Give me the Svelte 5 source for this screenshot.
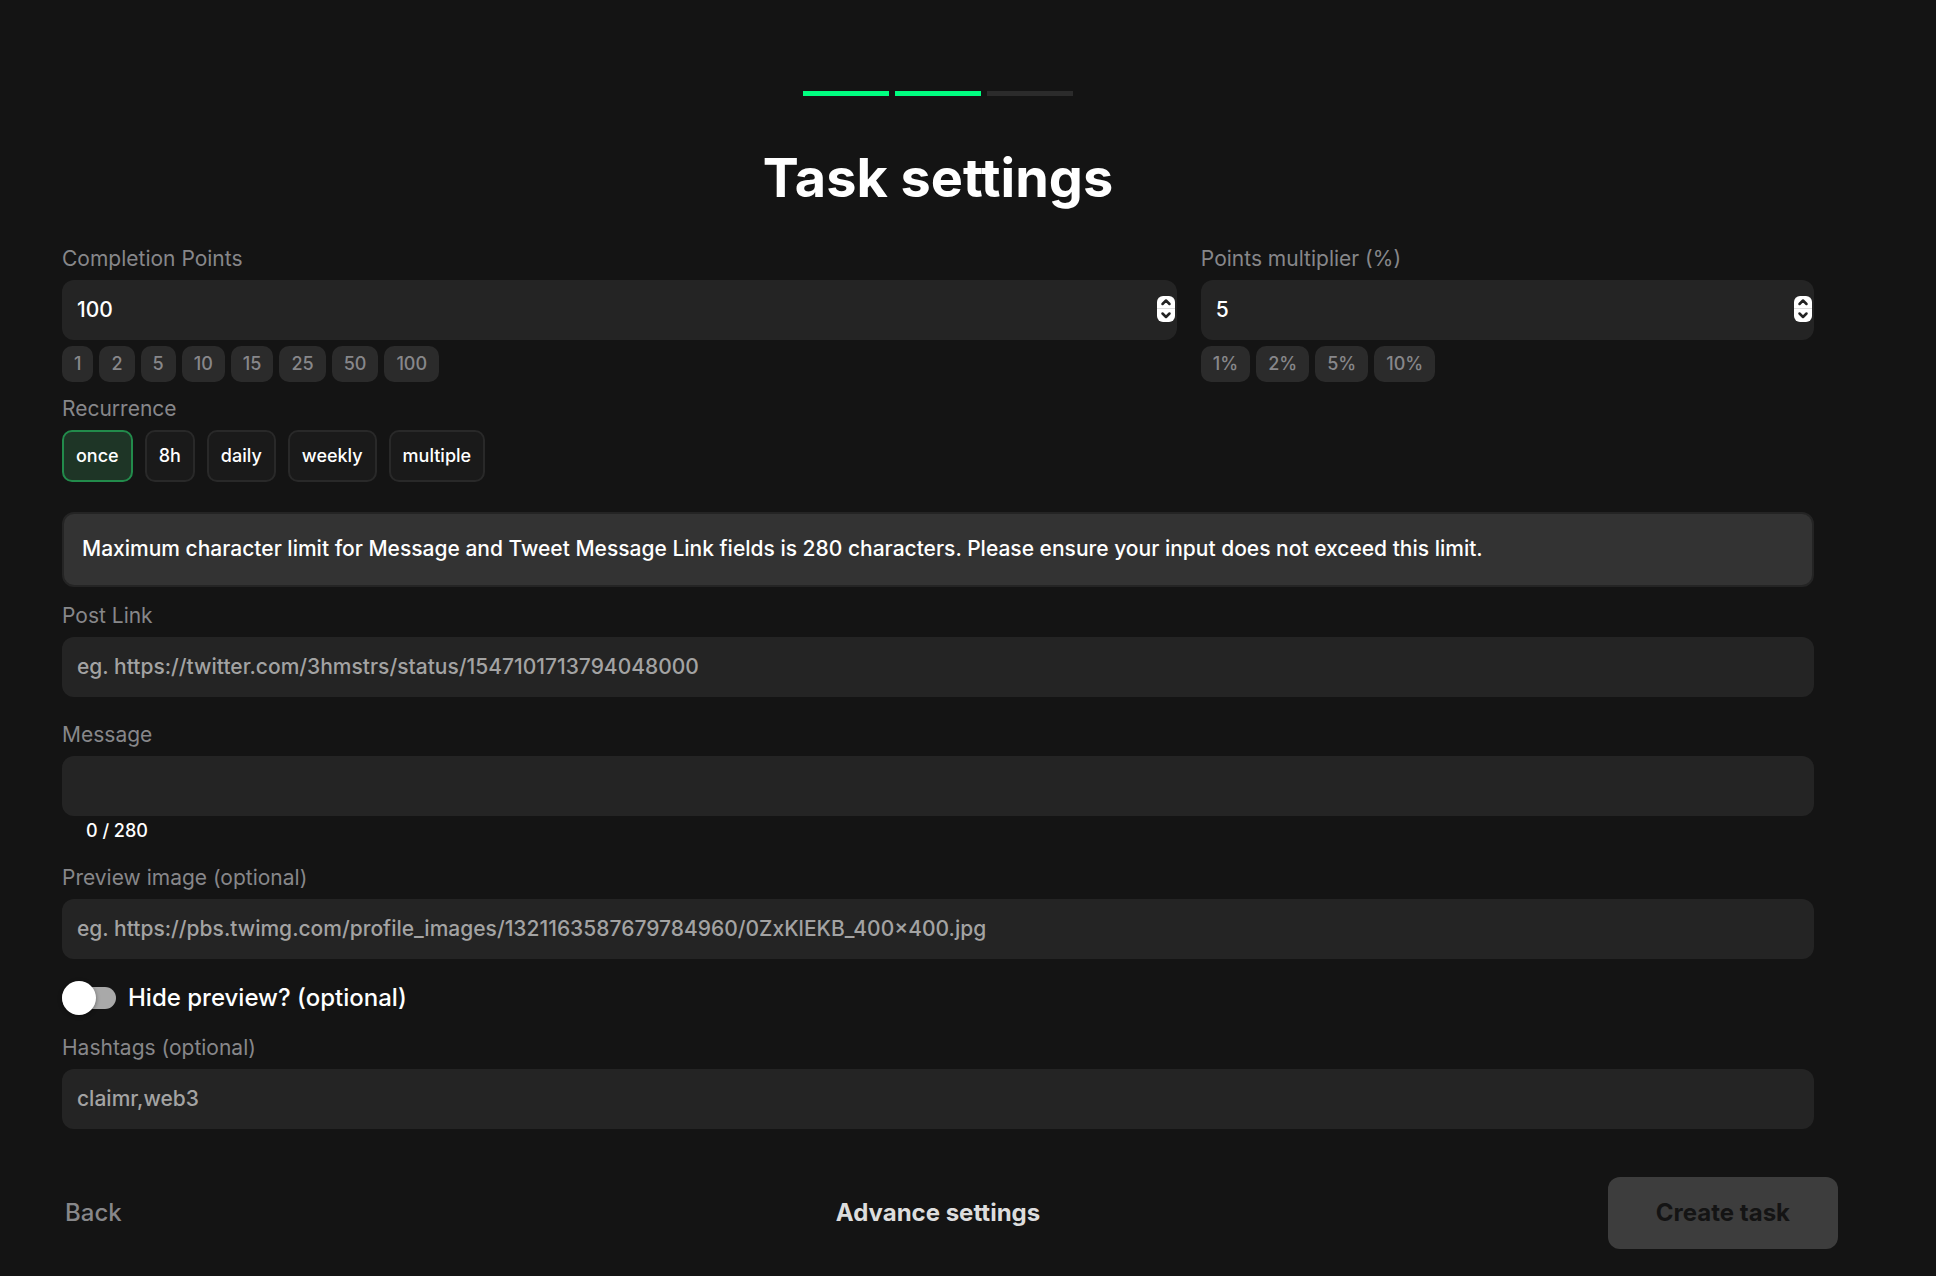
<script lang="ts">
  const steps = [true, true, false];
  const pointPresets = [1, 2, 5, 10, 15, 25, 50, 100];
  const multiplierPresets = [1, 2, 5, 10];
  const recurrences = ['once', '8h', 'daily', 'weekly', 'multiple'];
  const maxLength = 280;

  let points = $state(100);
  let multiplier = $state(5);
  let recurrence = $state('once');
  let postLink = $state('');
  let message = $state('');
  let previewImage = $state('');
  let hidePreview = $state(false);
  let hashtags = $state('');

  let canCreate = $derived(postLink !== '' && message.length <= maxLength);
</script>

{#snippet spinner(up: () => void, down: () => void)}
  <div class="spinner">
    <button type="button" aria-label="Increase" onclick={up}>
      <svg viewBox="0 0 18 13"><path d="M5.5 8 9 4.5 12.5 8" /></svg>
    </button>
    <button type="button" aria-label="Decrease" onclick={down}>
      <svg viewBox="0 0 18 13"><path d="M5.5 4.5 9 8l3.5-3.5" /></svg>
    </button>
  </div>
{/snippet}

<form class="task-settings" onsubmit={(e) => e.preventDefault()}>
  <div class="steps">
    {#each steps as done}
      <span class="step" class:done></span>
    {/each}
  </div>
  <h1>Task settings</h1>

  <div class="fields">
    <div class="points">
      <div>
        <label class="label" for="points">Completion Points</label>
        <div class="number">
          <input class="input" id="points" type="number" bind:value={points} />
          {@render spinner(() => points++, () => points--)}
        </div>
        <div class="presets">
          {#each pointPresets as preset}
            <button type="button" onclick={() => (points = preset)}>{preset}</button>
          {/each}
        </div>
      </div>
      <div>
        <label class="label" for="multiplier">Points multiplier (%)</label>
        <div class="number">
          <input class="input" id="multiplier" type="number" bind:value={multiplier} />
          {@render spinner(() => multiplier++, () => multiplier--)}
        </div>
        <div class="presets">
          {#each multiplierPresets as preset}
            <button type="button" onclick={() => (multiplier = preset)}>{preset}%</button>
          {/each}
        </div>
      </div>
    </div>

    <div class="recurrence">
      <span class="label" id="recurrence">Recurrence</span>
      <div class="options" role="group" aria-labelledby="recurrence">
        {#each recurrences as option}
          <button
            type="button"
            class:selected={recurrence === option}
            onclick={() => (recurrence = option)}
          >
            {option}
          </button>
        {/each}
      </div>
    </div>

    <p class="notice">
      Maximum character limit for Message and Tweet Message Link fields is 280 characters. Please
      ensure your input does not exceed this limit.
    </p>

    <div class="field">
      <label class="label" for="post-link">Post Link</label>
      <input
        class="input"
        id="post-link"
        type="text"
        placeholder="eg. https://twitter.com/3hmstrs/status/1547101713794048000"
        bind:value={postLink}
      />
    </div>

    <div class="field message">
      <label class="label" for="message">Message</label>
      <input class="input" id="message" type="text" bind:value={message} />
      <div class="counter">{message.length} / {maxLength}</div>
    </div>

    <div class="field">
      <label class="label" for="preview-image">Preview image (optional)</label>
      <input
        class="input"
        id="preview-image"
        type="text"
        placeholder="eg. https://pbs.twimg.com/profile_images/1321163587679784960/0ZxKlEKB_400x400.jpg"
        bind:value={previewImage}
      />
    </div>

    <label class="toggle">
      <input type="checkbox" bind:checked={hidePreview} />
      Hide preview? (optional)
    </label>

    <div>
      <label class="label" for="hashtags">Hashtags (optional)</label>
      <input
        class="input"
        id="hashtags"
        type="text"
        placeholder="claimr,web3"
        bind:value={hashtags}
      />
    </div>
  </div>

  <footer>
    <button type="button" class="back">Back</button>
    <button type="button" class="advance">Advance settings</button>
    <button type="submit" class="create" disabled={!canCreate}>Create task</button>
  </footer>
</form>

<style>
  :global(body) {
    background: #141414;
  }
  .task-settings {
    padding: 91px 98px 24px 38px;
    color: #fff;
    font-family: Inter, sans-serif;
    font-size: 21px;
    font-weight: 500;
    line-height: 30px;
  }
  button,
  input {
    box-sizing: border-box;
    margin: 0;
    border: none;
    font: inherit;
    color: inherit;
  }
  button {
    padding: 0;
    background: none;
    cursor: pointer;
  }
  .steps {
    display: flex;
    justify-content: center;
    gap: 6px;
  }
  .step {
    width: 86px;
    height: 5px;
    background: #2b2b2b;
  }
  .step.done {
    background: #00ff80;
  }
  h1 {
    margin: 48px 0 32px;
    font-size: 54px;
    font-weight: 700;
    line-height: 68px;
    text-align: center;
  }
  .fields {
    padding: 0 24px;
  }
  .points {
    display: grid;
    grid-template-columns: 20fr 11fr;
    gap: 24px;
  }
  .label {
    display: block;
    margin-bottom: 6px;
    color: #87878a;
    font-weight: 400;
  }
  .input {
    display: block;
    width: 100%;
    height: 60px;
    padding: 0 15px 2px;
    border-radius: 12px;
    background: #242424;
    outline: none;
    appearance: none;
  }
  .input::placeholder {
    color: #a3a3a3;
    opacity: 1;
  }
  .input[type='number'] {
    appearance: textfield;
  }
  .number {
    position: relative;
  }
  .spinner {
    position: absolute;
    top: 16px;
    right: 2px;
    width: 18px;
    border-radius: 6px;
    background: #fff;
    overflow: hidden;
  }
  .spinner button {
    display: block;
    width: 18px;
    height: 13px;
  }
  .spinner button + button {
    box-shadow: 0 0 0 1px #dcdcdc;
  }
  .spinner svg {
    display: block;
    width: 18px;
    height: 13px;
    fill: none;
    stroke: #222;
    stroke-width: 2.5;
    stroke-linecap: round;
    stroke-linejoin: round;
  }
  .presets {
    display: flex;
    gap: 6px;
    margin-top: 6px;
  }
  .presets button {
    height: 36px;
    padding: 0 12px;
    border-radius: 10px;
    background: #2b2b2b;
    color: #87878a;
    font-size: 18px;
  }
  .recurrence {
    margin-top: 12px;
  }
  .options {
    display: flex;
    gap: 12px;
  }
  .options button {
    height: 52px;
    padding: 0 12px;
    border: 2px solid #292929;
    border-radius: 10px;
    background: #1a1a1a;
    font-size: 18px;
  }
  .options button.selected {
    border-color: #228b4b;
    background: #1e3526;
  }
  .notice {
    margin: 30px 0 14px;
    padding: 20px 18px 21px;
    border: 2px solid #242424;
    border-radius: 12px;
    background: #333;
  }
  .field {
    margin-bottom: 22px;
  }
  .message {
    margin: 23px 0 17px;
  }
  .counter {
    padding: 0 24px;
    font-size: 18px;
  }
  .toggle {
    display: flex;
    align-items: center;
    gap: 12px;
    width: fit-content;
    margin: 22px 0 18px;
    font-size: 24px;
    line-height: 34px;
  }
  .toggle input {
    display: grid;
    align-items: center;
    width: 54px;
    height: 34px;
    appearance: none;
  }
  .toggle input::before,
  .toggle input::after {
    content: '';
    grid-area: 1 / 1;
  }
  .toggle input::before {
    height: 22px;
    border-radius: 11px;
    background: #a9a9a9;
  }
  .toggle input::after {
    width: 34px;
    height: 34px;
    border-radius: 50%;
    background: #fff;
    box-shadow: 0 1px 4px rgba(0, 0, 0, 0.4);
  }
  .toggle input:checked::before {
    background: #228b4b;
  }
  .toggle input:checked::after {
    justify-self: end;
  }
  footer {
    display: grid;
    grid-template-columns: 1fr auto 1fr;
    align-items: center;
    margin-top: 48px;
    font-size: 24px;
  }
  .back {
    justify-self: start;
    padding: 0 27px;
    color: #87878a;
  }
  .advance {
    color: #ddd;
    font-weight: 700;
  }
  .create {
    justify-self: end;
    height: 72px;
    padding: 0 48px;
    border-radius: 12px;
    background: #3d3d3d;
    color: #141414;
    font-weight: 700;
  }
</style>
